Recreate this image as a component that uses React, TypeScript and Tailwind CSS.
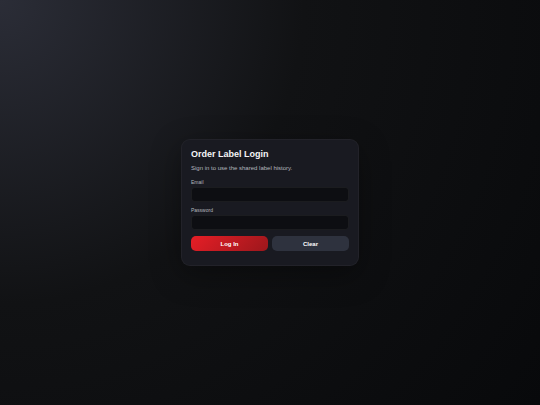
import { useState, type FormEvent } from 'react';

const inputClass =
  'mt-0.5 block h-[15px] w-full rounded border border-white/6 bg-[#0d0e12] px-1 text-[6px] text-[#f4f5f7] outline-none focus:border-[#e31e26]';
const labelClass = 'block text-[5px] leading-[6px] text-[#b4b6be]';
const buttonClass = 'h-[15px] flex-1 rounded-[5px] text-[6px] leading-none font-bold text-white';

export default function App() {
  const [email, setEmail] = useState('');
  const [password, setPassword] = useState('');

  const handleSubmit = (e: FormEvent) => {
    e.preventDefault();
  };

  const handleClear = () => {
    setEmail('');
    setPassword('');
  };

  return (
    <main className="flex min-h-screen items-center justify-center bg-[#0c0d10] bg-[radial-gradient(circle_at_top_left,#2b2d37_0%,#111214_45%,#08090b_100%)] font-['Liberation_Sans',Arial,sans-serif]">
      <form
        onSubmit={handleSubmit}
        className="w-full max-w-[178px] rounded-[9px] border border-white/4 bg-[#191a21] px-[9px] pt-[9px] pb-3.5 shadow-[0_9px_30px_rgba(0,0,0,0.35)]"
      >
        <h1 className="text-[9px] leading-[10px] font-bold text-[#f4f5f7]">Order Label Login</h1>
        <p className="mt-[5px] text-[6px] leading-2 text-[#b4b6be]">Sign in to use the shared label history.</p>

        {/* Credentials */}
        <div className="mt-[7px]">
          <label htmlFor="email" className={labelClass}>Email</label>
          <input
            id="email"
            type="email"
            value={email}
            onChange={(e) => setEmail(e.target.value)}
            className={inputClass}
          />
        </div>
        <div className="mt-[5px]">
          <label htmlFor="password" className={labelClass}>Password</label>
          <input
            id="password"
            type="password"
            value={password}
            onChange={(e) => setPassword(e.target.value)}
            className={inputClass}
          />
        </div>

        {/* Actions */}
        <div className="mt-1.5 flex gap-1">
          <button type="submit" className={`${buttonClass} bg-[linear-gradient(135deg,#e61e26,#9c171c)]`}>
            Log In
          </button>
          <button type="button" onClick={handleClear} className={`${buttonClass} bg-[#2e323e]`}>
            Clear
          </button>
        </div>
      </form>
    </main>
  );
}
